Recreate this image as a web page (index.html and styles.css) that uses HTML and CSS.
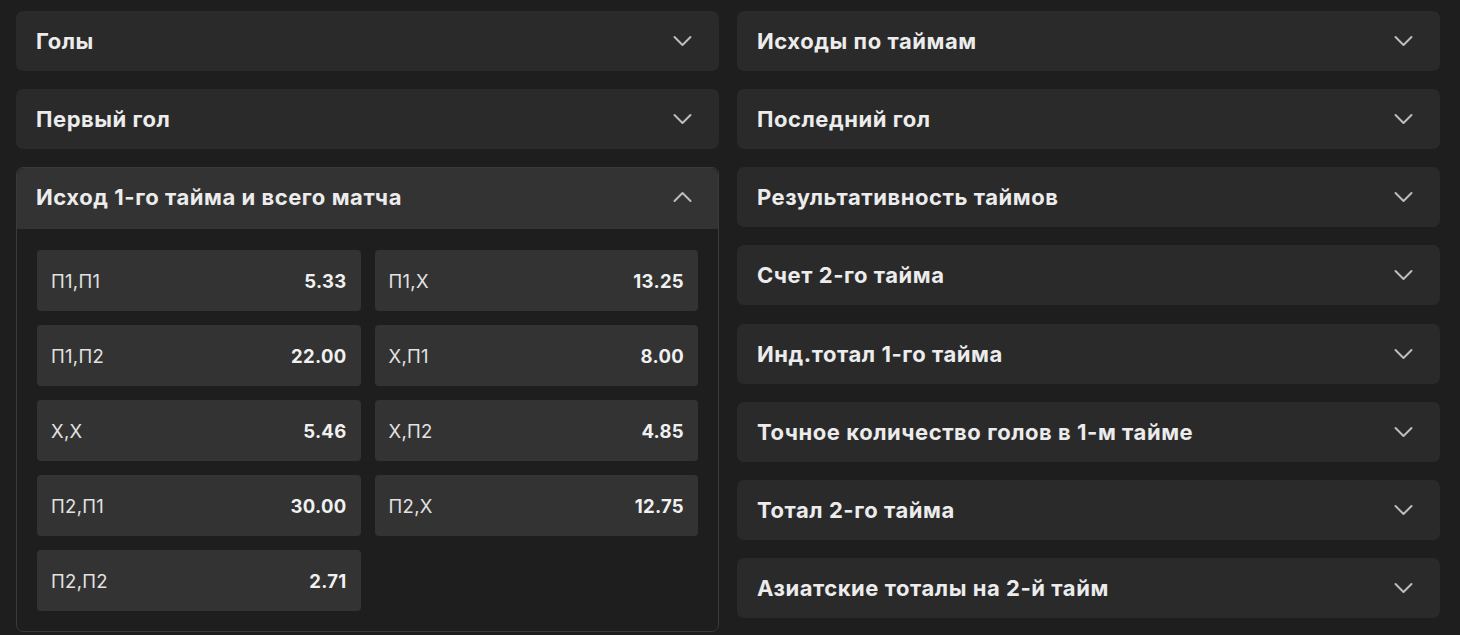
FILE: index.html
```html
<!DOCTYPE html>
<html lang="ru">
<head>
  <meta charset="UTF-8">
  <meta name="viewport" content="width=device-width, initial-scale=1.0">
  <title>Рынки</title>
  <link rel="stylesheet" href="styles.css">
</head>
<body>

<div class="markets">
  <div class="column">
    <div class="market">
      <div class="market-head">
        <span>Голы</span>
        <svg class="chevron" viewBox="0 0 20 12"><path d="M2 2l8 8 8-8"/></svg>
      </div>
    </div>
    <div class="market">
      <div class="market-head">
        <span>Первый гол</span>
        <svg class="chevron" viewBox="0 0 20 12"><path d="M2 2l8 8 8-8"/></svg>
      </div>
    </div>
    <div class="market open">
      <div class="market-head">
        <span>Исход 1-го тайма и всего матча</span>
        <svg class="chevron" viewBox="0 0 20 12"><path d="M2 10l8-8 8 8"/></svg>
      </div>
      <div class="market-body">
        <div class="odd"><span>П1,П1</span><b>5.33</b></div>
        <div class="odd"><span>П1,Х</span><b>13.25</b></div>
        <div class="odd"><span>П1,П2</span><b>22.00</b></div>
        <div class="odd"><span>Х,П1</span><b>8.00</b></div>
        <div class="odd"><span>Х,Х</span><b>5.46</b></div>
        <div class="odd"><span>Х,П2</span><b>4.85</b></div>
        <div class="odd"><span>П2,П1</span><b>30.00</b></div>
        <div class="odd"><span>П2,Х</span><b>12.75</b></div>
        <div class="odd"><span>П2,П2</span><b>2.71</b></div>
      </div>
    </div>
  </div>

  <div class="column">
    <div class="market">
      <div class="market-head">
        <span>Исходы по таймам</span>
        <svg class="chevron" viewBox="0 0 20 12"><path d="M2 2l8 8 8-8"/></svg>
      </div>
    </div>
    <div class="market">
      <div class="market-head">
        <span>Последний гол</span>
        <svg class="chevron" viewBox="0 0 20 12"><path d="M2 2l8 8 8-8"/></svg>
      </div>
    </div>
    <div class="market">
      <div class="market-head">
        <span>Результативность таймов</span>
        <svg class="chevron" viewBox="0 0 20 12"><path d="M2 2l8 8 8-8"/></svg>
      </div>
    </div>
    <div class="market">
      <div class="market-head">
        <span>Счет 2-го тайма</span>
        <svg class="chevron" viewBox="0 0 20 12"><path d="M2 2l8 8 8-8"/></svg>
      </div>
    </div>
    <div class="market">
      <div class="market-head">
        <span>Инд.тотал 1-го тайма</span>
        <svg class="chevron" viewBox="0 0 20 12"><path d="M2 2l8 8 8-8"/></svg>
      </div>
    </div>
    <div class="market">
      <div class="market-head">
        <span>Точное количество голов в 1-м тайме</span>
        <svg class="chevron" viewBox="0 0 20 12"><path d="M2 2l8 8 8-8"/></svg>
      </div>
    </div>
    <div class="market">
      <div class="market-head">
        <span>Тотал 2-го тайма</span>
        <svg class="chevron" viewBox="0 0 20 12"><path d="M2 2l8 8 8-8"/></svg>
      </div>
    </div>
    <div class="market">
      <div class="market-head">
        <span>Азиатские тоталы на 2-й тайм</span>
        <svg class="chevron" viewBox="0 0 20 12"><path d="M2 2l8 8 8-8"/></svg>
      </div>
    </div>
  </div>
</div>

</body>
</html>
```

FILE: styles.css
```css
body {
  margin: 0;
  padding: 0;
  background-color: #1e1e1e;
  color: #ececec;
  font-family: Inter, "Noto Sans", sans-serif;
}
.markets {
  display: grid;
  grid-template-columns: 703px 703px;
  gap: 18px;
  padding: 11px 16px 0 16px;
}
.column {
  display: flex;
  flex-direction: column;
  gap: 18.15px;
}
.market {
  background: #2a2a2a;
  border-radius: 7px;
}
.market-head {
  height: 60px;
  display: flex;
  align-items: center;
  justify-content: space-between;
  padding: 0 26px 0 20px;
  font-size: 22px;
  font-weight: 700;
  letter-spacing: 0.55px;
}
.chevron {
  width: 21px;
  height: 12px;
  fill: none;
  stroke: #bdbdbd;
  stroke-width: 2;
  stroke-linecap: round;
  stroke-linejoin: round;
}
.market.open {
  background: #1e1e1e;
  border: 1px solid #3a3a3a;
}
.market.open .market-head {
  background: #333333;
  height: 58px;
  padding: 0 25px 3px 19px;
  border-radius: 7px 7px 0 0;
}
.market-body {
  display: grid;
  grid-template-columns: 1fr 1fr;
  gap: 14px;
  padding: 21px 20px 20px 20px;
}
.odd {
  height: 61px;
  background: #333333;
  border-radius: 4px;
  display: flex;
  align-items: center;
  justify-content: space-between;
  padding: 0 14px;
  font-size: 18.5px;
  letter-spacing: 0.3px;
}
.odd span {
  color: #e2e2e2;
}
.odd b {
  font-weight: 700;
  color: #f0f0f0;
}
```
